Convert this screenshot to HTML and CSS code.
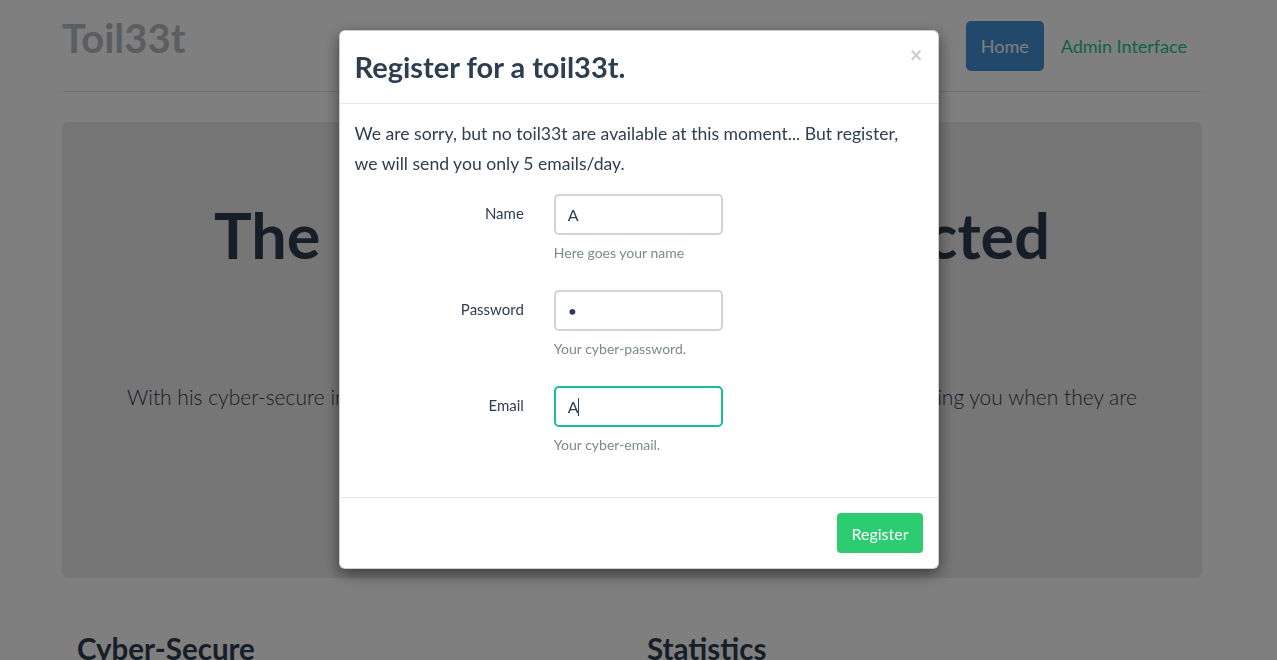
FILE: index.html
```html
<!DOCTYPE html>
<html lang="en">
<head>
<meta charset="utf-8">
<title>Toil33t</title>
<link rel="stylesheet" href="styles.css">
</head>
<body>
<div class="container">
  <header class="header">
    <h3 class="brand">Toil33t</h3>
    <nav class="pills">
      <a class="pill pill-active" href="#">Home</a>
      <a class="pill" href="#">Admin Interface</a>
    </nav>
  </header>

  <div class="jumbotron">
    <h1 class="display">The Internet Toilet Connected</h1>
    <p class="lead">With his cyber-secure infrastructure, toil33t now monitors all the toilets in real-time, warning you when they are<br>available, and free.</p>
    <a class="btn btn-success btn-lg" href="#">Sign up today</a>
  </div>

  <div class="marketing">
    <div class="marketing-col"><h4>Cyber-Secure</h4></div>
    <div class="marketing-col"><h4>Statistics</h4></div>
  </div>
</div>

<div class="backdrop"></div>

<div class="modal">
  <div class="modal-dialog">
    <div class="modal-content">
      <div class="modal-header">
        <h3 class="modal-title">Register for a toil33t.</h3>
        <button class="close" type="button">×</button>
      </div>
      <div class="modal-body">
        <p class="intro">We are sorry, but no toil33t are available at this moment... But register, we will send you only 5 emails/day.</p>
        <form class="form">
          <div class="form-group">
            <label class="form-label" for="name">Name</label>
            <div class="form-field">
              <input class="form-control" id="name" type="text" value="A">
              <span class="help">Here goes your name</span>
            </div>
          </div>
          <div class="form-group">
            <label class="form-label" for="password">Password</label>
            <div class="form-field">
              <input class="form-control" id="password" type="password" value="a">
              <span class="help">Your cyber-password.</span>
            </div>
          </div>
          <div class="form-group">
            <label class="form-label" for="email">Email</label>
            <div class="form-field">
              <input class="form-control form-control-focus" id="email" type="text" value="A">
              <span class="caret"></span>
              <span class="help">Your cyber-email.</span>
            </div>
          </div>
        </form>
      </div>
      <div class="modal-footer">
        <button class="btn btn-success" type="button">Register</button>
      </div>
    </div>
  </div>
</div>
</body>
</html>
```

FILE: styles.css
```css
* { box-sizing: border-box; }
html, body { margin: 0; }
body {
  font-family: Lato, "Helvetica Neue", Arial, sans-serif;
  font-size: 15px;
  line-height: 1.42857;
  color: #2c3e50;
  background: #fff;
  padding-right: 13px;
  overflow: hidden;
  height: 660px;
}
a { text-decoration: none; }

.container { width: 1140px; margin: 0 auto; }

.header {
  display: flex;
  justify-content: space-between;
  align-items: flex-start;
  padding-top: 21px;
  padding-bottom: 20px;
  border-bottom: 1px solid #e5e5e5;
}
.brand {
  margin: 0;
  font-size: 40px;
  line-height: 34px;
  font-weight: 700;
  color: #b4bcc2;
}
.pills { display: flex; gap: 2px; }
.pill {
  display: block;
  height: 50px;
  line-height: 50px;
  padding: 0 15px;
  font-size: 18px;
  border-radius: 5px;
  color: #22c58b;
}
.pill-active { background: #4492d6; color: #fff; }

.jumbotron {
  margin-top: 30px;
  height: 456px;
  padding: 48px 60px;
  background: #ececec;
  border-radius: 6px;
  text-align: center;
}
.display {
  margin: 30px 0 0;
  font-size: 63px;
  line-height: 1.1;
  font-weight: 700;
  color: #2c3e50;
}
.lead {
  margin: 112px 0 20px;
  font-size: 21px;
  line-height: 32px;
  font-weight: 300;
}
.btn {
  display: inline-block;
  border: 0;
  border-radius: 4px;
  font-family: inherit;
  cursor: pointer;
}
.btn-success { background: #2ecc71; color: #fff; }
.btn-lg { font-size: 19px; padding: 14px 24px; }

.marketing { display: flex; padding-top: 55px; }
.marketing-col { flex: 1; padding: 0 15px; }
.marketing h4 {
  margin: 0;
  font-size: 29.5px;
  line-height: 1.1;
  font-weight: 700;
}

.backdrop {
  position: fixed;
  inset: 0;
  background: rgba(0, 0, 0, 0.5);
}

.modal { position: fixed; inset: 0; overflow: hidden; }
.modal-dialog { width: 600px; margin: 30px auto; }
.modal-content {
  background: #fff;
  border: 1px solid rgba(0, 0, 0, 0.2);
  border-radius: 6px;
  box-shadow: 0 5px 15px rgba(0, 0, 0, 0.5);
}
.modal-header {
  display: flex;
  justify-content: space-between;
  align-items: flex-start;
  padding: 15px;
  border-bottom: 1px solid #e5e5e5;
}
.modal-title {
  margin: 0;
  font-size: 29px;
  line-height: 42px;
  font-weight: 700;
}
.close {
  margin: 0;
  padding: 0;
  background: none;
  border: 0;
  font-family: inherit;
  font-size: 22px;
  line-height: 18px;
  font-weight: 700;
  color: #000;
  opacity: 0.2;
}
.modal-body { padding: 15px; }
.intro { margin: 0 0 15px; font-size: 17.6px; line-height: 30px; }

.form-group { display: flex; margin: 0 -15px 27px; }
.form-label {
  width: 33.333%;
  padding: 9px 15px 0;
  text-align: right;
  font-size: 15px;
  line-height: 21px;
}
.form-field { position: relative; width: 33.333%; padding: 0 15px; }
.form-control {
  display: block;
  width: 100%;
  height: 41px;
  padding: 0 12px;
  border: 2px solid #ced4da;
  border-radius: 5px;
  font-family: inherit;
  font-size: 16px;
  color: #2c3e50;
  outline: none;
}
.form-control-focus { border-color: #18bc9c; }
.caret {
  position: absolute;
  left: 39px;
  top: 12px;
  width: 1px;
  height: 18px;
  background: #2c3e50;
}
.help {
  display: block;
  margin-top: 8px;
  font-size: 14px;
  line-height: 20px;
  color: #7b8a8b;
}

.modal-footer {
  padding: 15px;
  border-top: 1px solid #e5e5e5;
  text-align: right;
}
.modal-footer .btn { height: 40px; padding: 0 14px; font-size: 16px; }
```
